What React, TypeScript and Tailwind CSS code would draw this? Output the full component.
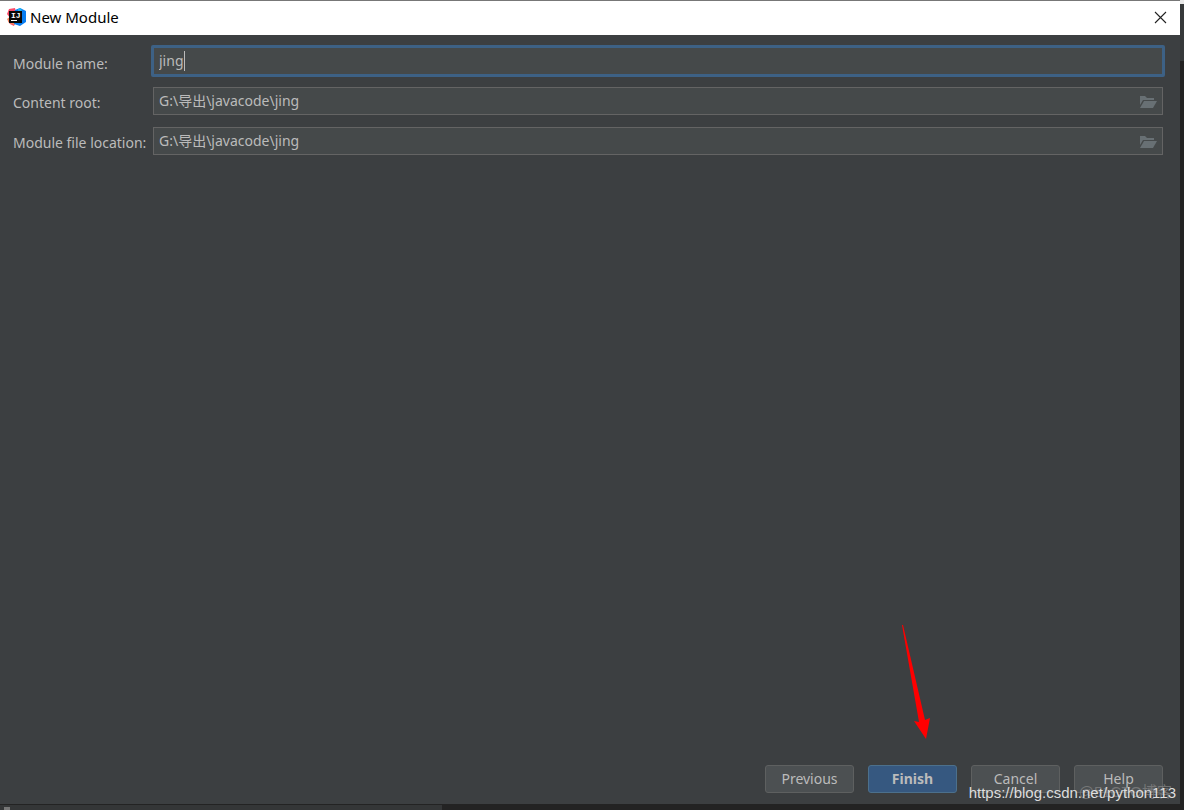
import { useState } from "react"

const buttonBase =
  "h-7 w-[89px] rounded-[3px] border text-sm leading-5 flex items-center justify-center"

function IdeaLogo() {
  return (
    <svg width="20" height="20" viewBox="0 0 20 20" aria-hidden="true">
      <path d="M2 2 L8 1 L10 10 L7 19 L3 17 L1 14 L3 11 L0 7 Z" fill="#fd4a68" />
      <path d="M0 12 L4 9 L8 14 L8 18 L2 16 Z" fill="#f8875c" />
      <path d="M8 3 L13 1 L19 4 L19 15 L13 19 L7 17 Z" fill="#087cf0" />
      <path d="M11 2 L14 1 L15 5 L11 5 Z" fill="#20b8f5" />
      <rect x="2" y="4" width="13" height="12" fill="#080808" />
      <text x="4" y="11" fill="#ffffff" fontSize="8" fontWeight="700" fontFamily="Liberation Mono, monospace">
        IJ
      </text>
      <rect x="4" y="13" width="6" height="1" fill="#ffffff" />
    </svg>
  )
}

function FolderIcon() {
  return (
    <svg width="18" height="14" viewBox="0 0 18 14" aria-hidden="true">
      <path d="M1 1 H6 L8 3 H15 V5 H4 L1 10 Z" fill="#687074" />
      <path d="M5 6 H18 L14 13 H1 Z" fill="#687074" />
    </svg>
  )
}

function PathField({ id, label, initial }: { id: string; label: string; initial: string }) {
  const [value, setValue] = useState(initial)

  return (
    <div className="flex items-start">
      <label htmlFor={id} className="w-[140px] shrink-0 pt-1.5 whitespace-nowrap leading-5">
        {label}
      </label>
      <div className="flex h-7 min-w-0 flex-1 items-center border border-[#646464] bg-[#45494a] pr-[5px]">
        <input
          id={id}
          value={value}
          onChange={(e) => setValue(e.target.value)}
          className="h-full min-w-0 flex-1 bg-transparent px-[5px] pb-0.5 leading-5 outline-none"
        />
        <button type="button" aria-label={`Browse ${label}`} className="shrink-0 pt-0.5">
          <FolderIcon />
        </button>
      </div>
    </div>
  )
}

export default function App() {
  const [name, setName] = useState("jing")

  return (
    <div className="relative flex h-screen flex-col bg-[#232323] pr-1 pb-1.5 font-['Noto_Sans','Noto_Sans_CJK_SC',sans-serif] text-sm text-[#bbbbbb]">
      {/* Title bar */}
      <header className="flex h-[35px] shrink-0 items-center border-t border-[#777777] bg-white pr-3 pb-0.5 pl-[7px] text-black">
        <IdeaLogo />
        <h1 className="ml-[3px] flex-1 text-[15px] leading-5">New Module</h1>
        <button type="button" aria-label="Close" className="p-px">
          <svg width="13" height="13" viewBox="0 0 13 13" aria-hidden="true">
            <path d="M1 1 L12 12 M12 1 L1 12" stroke="#222222" strokeWidth="1.1" />
          </svg>
        </button>
      </header>

      <main className="flex min-h-0 flex-1 flex-col bg-[#3c3f41] pt-2.5 pr-[17px] pb-[11px] pl-[13px]">
        <form className="flex flex-1 flex-col" onSubmit={(e) => e.preventDefault()}>
          <div className="flex items-start">
            <label htmlFor="module-name" className="w-[138px] shrink-0 pt-[9px] leading-5">
              Module name:
            </label>
            <div className="-mr-0.5 flex h-8 min-w-0 flex-1 items-center rounded-[2px] border-3 border-[#3d6185] bg-[#45494a] px-[5px]">
              <input
                id="module-name"
                value={name}
                onChange={(e) => setName(e.target.value)}
                className="field-sizing-content max-w-full bg-transparent leading-5 caret-transparent outline-none"
              />
              <span className="h-5 w-px bg-[#bbbbbb]" />
            </div>
          </div>
          <div className="mt-2.5 flex flex-col gap-3">
            <PathField id="content-root" label="Content root:" initial="G:\导出\javacode\jing" />
            <PathField id="module-file" label="Module file location:" initial="G:\导出\javacode\jing" />
          </div>

          <footer className="mt-auto flex justify-end gap-3.5">
            <button type="button" className={`${buttonBase} border-[#5e6060] bg-[#4c5052]`}>
              Previous
            </button>
            <button type="submit" className={`${buttonBase} border-[#4c708c] bg-[#365880] font-bold`}>
              Finish
            </button>
            <button type="button" className={`${buttonBase} border-[#5e6060] bg-[#4c5052]`}>
              Cancel
            </button>
            <button type="button" className={`${buttonBase} border-[#5e6060] bg-[#4c5052]`}>
              Help
            </button>
          </footer>
        </form>
      </main>

      {/* Editor window showing behind the dialog */}
      <div className="absolute bottom-0 left-0 h-[5px] w-[442px] bg-[#343637]" />
      <div className="absolute bottom-0 left-1 h-[3px] w-1.5 bg-[#777777]" />
      <div className="absolute top-0 right-0 h-[61px] w-1 border-t-4 border-[#e8e8e8] bg-[#36393a]" />

      {/* Pointer to the Finish button */}
      <svg
        className="pointer-events-none absolute right-[252px] bottom-[70px]"
        width="32"
        height="116"
        viewBox="0 0 32 116"
        aria-hidden="true"
      >
        <path d="M2 1 L3 1 L25 96 L30 94 L26 115 L14 97 L19 98 Z" fill="#ff0000" />
      </svg>

      {/* Watermarks */}
      <span className="pointer-events-none absolute right-3 bottom-2 font-['Liberation_Sans','Noto_Sans_CJK_SC',sans-serif] text-[15px] leading-5 text-[#888888]/70">
        @51CTO博客
      </span>
      <span className="pointer-events-none absolute right-2 bottom-[7px] font-['Liberation_Sans',sans-serif] text-[15px] leading-5 text-[#dddddd]">
        https://blog.csdn.net/python113
      </span>
    </div>
  )
}
